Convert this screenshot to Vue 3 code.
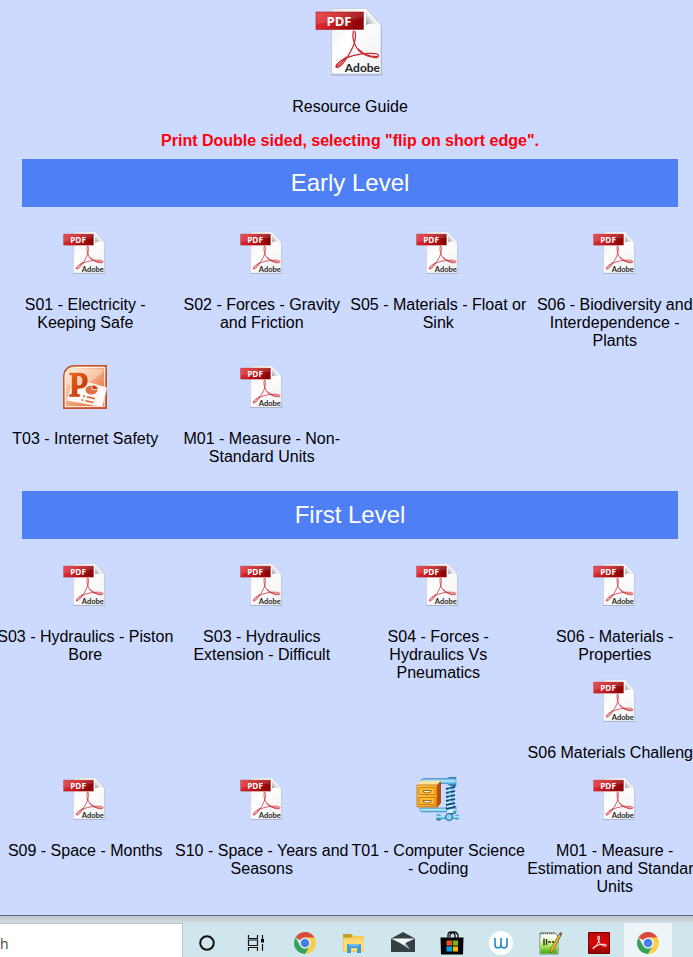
<script setup>
import { h } from 'vue'

const earlyLevel = [
  [{ icon: 'pdf', label: 'S01 - Electricity - Keeping Safe' }],
  [{ icon: 'pdf', label: 'S02 - Forces - Gravity and Friction' }],
  [{ icon: 'pdf', label: 'S05 - Materials - Float or Sink' }],
  [{ icon: 'pdf', label: 'S06 - Biodiversity and Interdependence - Plants' }],
  [{ icon: 'ppt', label: 'T03 - Internet Safety' }],
  [{ icon: 'pdf', label: 'M01 - Measure - Non-Standard Units' }],
]
const firstLevel = [
  [{ icon: 'pdf', label: 'S03 - Hydraulics - Piston Bore' }],
  [{ icon: 'pdf', label: 'S03 - Hydraulics Extension - Difficult' }],
  [{ icon: 'pdf', label: 'S04 - Forces - Hydraulics Vs Pneumatics' }],
  [
    { icon: 'pdf', label: 'S06 - Materials - Properties' },
    { icon: 'pdf', label: 'S06 Materials Challenge' },
  ],
  [{ icon: 'pdf', label: 'S09 - Space - Months' }],
  [{ icon: 'pdf', label: 'S10 - Space - Years and Seasons' }],
  [{ icon: 'zip', label: 'T01 - Computer Science - Coding' }],
  [{ icon: 'pdf', label: 'M01 - Measure - Estimation and Standard Units' }],
]
const sections = [
  { title: 'Early Level', cells: earlyLevel },
  { title: 'First Level', cells: firstLevel },
]
const apps = ['cortana', 'tasks', 'chrome', 'folder', 'mail', 'store', 'w', 'notepad', 'acrobat', 'chrome']

// The PDF badge carries two words of live text over its artwork.
const pdfWords = () => [
  h('text', { x: 11.5, y: 18.5, 'font-size': 13, 'font-weight': 700, 'font-family': 'Open Sans, sans-serif', fill: '#fff' }, 'PDF'),
  h('text', { x: 65, y: 65, 'text-anchor': 'end', 'font-size': 12, 'font-weight': 700, 'font-family': 'Lato, sans-serif', fill: '#262626' }, 'Adobe'),
]
const Icon = (props) => h('svg', { viewBox: props.box, 'aria-hidden': 'true' }, [
  h('use', { href: '#i-' + props.name }),
  ...(props.name === 'pdf' ? pdfWords() : []),
])
Icon.props = ['name', 'box']
</script>

<template>
  <svg class="defs" aria-hidden="true">
    <defs>
      <linearGradient id="g-red" x1="0" x2="1" y1="0" y2="0.3">
        <stop offset="0" stop-color="#e8383b" /><stop offset="0.5" stop-color="#c91c20" /><stop offset="1" stop-color="#8d0509" />
      </linearGradient>
      <linearGradient id="g-page" x1="0" x2="1" y1="0" y2="1">
        <stop offset="0" stop-color="#e9e9ea" /><stop offset="0.4" stop-color="#ffffff" /><stop offset="1" stop-color="#f1f1f1" />
      </linearGradient>
      <linearGradient id="g-fold" x1="0" x2="1" y1="1" y2="0">
        <stop offset="0" stop-color="#8f9499" /><stop offset="0.5" stop-color="#ffffff" /><stop offset="1" stop-color="#c8ccd0" />
      </linearGradient>
      <linearGradient id="g-ppt" x1="0" x2="1" y1="0" y2="1">
        <stop offset="0" stop-color="#fff0dc" /><stop offset="0.45" stop-color="#f6ae83" /><stop offset="1" stop-color="#dc5423" />
      </linearGradient>
      <linearGradient id="g-p" x1="0" x2="1" y1="0" y2="1">
        <stop offset="0" stop-color="#ec6a20" /><stop offset="1" stop-color="#b9290a" />
      </linearGradient>
      <linearGradient id="g-steel" x1="0" x2="0" y1="0" y2="1">
        <stop offset="0" stop-color="#1d699e" /><stop offset="0.4" stop-color="#b8efff" /><stop offset="0.7" stop-color="#3c9dd4" /><stop offset="1" stop-color="#124672" />
      </linearGradient>
      <linearGradient id="g-gold" x1="0" x2="1" y1="0" y2="1">
        <stop offset="0" stop-color="#ffd44e" /><stop offset="1" stop-color="#f49b12" />
      </linearGradient>
      <linearGradient id="g-green" x1="0" x2="0" y1="0" y2="1">
        <stop offset="0" stop-color="#f4ffe6" /><stop offset="0.45" stop-color="#baf06a" /><stop offset="1" stop-color="#3fa70c" />
      </linearGradient>
      <linearGradient id="g-acro" x1="0" x2="0" y1="0" y2="1">
        <stop offset="0" stop-color="#b90a0a" /><stop offset="0.5" stop-color="#d80808" /><stop offset="1" stop-color="#8f0202" />
      </linearGradient>
    </defs>

    <g id="i-pdf">
      <path d="M16 2h36l15 17v49.500H16z" fill="#8e98b4" opacity=".6" />
      <path d="M16.500 1.500H51L66 18.500V67H16.500z" fill="url(#g-page)" stroke="#c3c8d2" stroke-width=".7" />
      <path d="M51 2 66 19c-5-3-10-3-15-1z" fill="url(#g-fold)" />
      <g fill="none" stroke="#cc2630" stroke-width="1.200" stroke-linecap="round">
        <path d="M38.500 24c-1.500 5 .5 12 3 16.500C45 46 51 49.500 59 50.500c3 .4 5-.8 4.500-2-1-2.500-11-2.500-18-1.300-8 1.300-16.500 4.300-20.500 7.300-4.500 3.500-5 6.500-2.500 6 5-1.500 12.500-13.500 16-22 2-5 2.500-11.500 1.500-14" />
        <path d="M21.500 59.500c3-1 6-5 9.500-9.500M43 42c5 4.500 12 8 19 7.500" />
      </g>
      <path d="M1 5h47.500v17.500H1z" fill="url(#g-red)" stroke="#a71a20" stroke-width=".6" />
      <path d="M1.500 5.500H48v5L1.500 17z" fill="#fff" opacity=".12" />
    </g>

    <g id="i-ppt">
      <path d="M12 .7h31.300v42.600H.7V12Q1 1 12 .7z" fill="url(#g-ppt)" stroke="#c5532b" stroke-width="1.400" />
      <path d="M12 2.500h29.500v39h-39V12Q3 3 12 2.500z" fill="none" stroke="#fff" stroke-opacity=".8" />
      <path d="M4 19Q20 26 40 7V4H14Q4 4 4 14z" fill="#fff" opacity=".35" />
      <path d="M8 22 23 16.500 44 22.500 39.500 42 3.500 35.500z" fill="#fffaf6" stroke="#edc4ae" stroke-width=".5" />
      <ellipse cx="28.500" cy="25" rx="6" ry="4.500" fill="#e06f46" /><path d="M29 24.500V20q6 0 6 4.500z" fill="#c94117" stroke="#fff" stroke-width=".7" />
      <path d="m20 31 2 .4m2 .5 8 1.800M18.500 34.800l2 .4m2 .5 8 1.800" stroke="#dc6338" stroke-width="1.600" />
      <path d="M6 7.500h10.500q8.500 0 8.500 8T16 24h-1.500v5h2.500v3H6v-3h2.500V10.500H6zm8.500 4v8.500H16q3 0 3-4.300t-3-4.200z" fill="url(#g-p)" fill-rule="evenodd" stroke="#fff2e6" stroke-width=".5" />
    </g>

    <g id="i-zip">
      <path d="M5 5Q4 1.500 9 1.500h22l3-1.500h6v9l-4 1-5-3.500H8z" fill="url(#g-steel)" stroke="#2875a8" stroke-width=".5" />
      <path d="M4 31h25l3-2h8v7l-5 2-5-3H7q-4 0-3-4z" fill="url(#g-steel)" stroke="#2875a8" stroke-width=".5" />
      <path d="M31 9h6v27h-6z" fill="#d9f1f8" />
      <path d="m30 12 9-2m-9 6 9-2m-9 6 9-2m-9 6 9-2m-9 6 9-2m-9 6 9-2" stroke="#164b83" stroke-width="1.800" />
      <path d="m31 10 7 3.500M31 14l7 3.500M31 18l7 3.500M31 22l7 3.500" stroke="#55b1d8" stroke-width=".8" />
      <path d="M20 38q4-2 6 1h12q3-3 6 0-1 5-5 3H26q-4 3-6 0z" fill="url(#g-steel)" /><circle cx="33" cy="40" r="3.500" fill="#8ed5ef" stroke="#165788" />
      <path d="m1 8 4-4h19l-3 4z" fill="#ffe59a" /><path d="m21 8 4-4v22l-4 5z" fill="#b54c12" />
      <path d="M1 8h20v22H1z" fill="url(#g-gold)" stroke="#bf680e" stroke-width=".8" />
      <path d="M3 10.500h16v7H3zM3 20.500h16v7H3z" fill="#ffbd2f" stroke="#c46f18" stroke-width=".8" />
      <path d="M7 13.500h8v1.500q-4 2-8 0zM7 23.500h8V25q-4 2-8 0z" fill="#fff4c5" stroke="#70420e" stroke-width=".7" />
    </g>

    <g id="i-cortana"><circle cx="12" cy="12" r="6.800" fill="none" stroke="#0b1013" stroke-width="2" /></g>
    <g id="i-tasks">
      <path d="M4.500 4v3.500h9V4M4.500 20v-3.500h9V20M4.500 9h9v5.500h-9zM18.500 4v4M18.500 13v7" fill="none" stroke="#111" stroke-width="1.200" /><path d="M17 8h3v3.500h-3z" fill="#111" />
    </g>
    <g id="i-chrome">
      <path d="M12 12 2.500 6.500A11 11 0 0 1 21.500 6.500z" fill="#d84a3d" />
      <path d="M12 6.500h9.500q1.500 2.500 1.500 5.500a11 11 0 0 1-11 11l5-8z" fill="#fbd047" />
      <path d="M2.500 6.500 7 14.500l5 3 4.500-2L12 23A11 11 0 0 1 2.500 6.500z" fill="#36a159" />
      <circle cx="12" cy="12" r="5.600" fill="#f5f8f7" /><circle cx="12" cy="12" r="4.300" fill="#467fe5" />
    </g>
    <g id="i-folder">
      <path d="M1 3h8l2 2h11v16H1z" fill="#f5cb55" /><path d="M1 3h8l2 2-2 1.500H1z" fill="#c79b22" /><path d="M2 8h20v12H2z" fill="#ffda70" />
      <path d="M5 14q0-1 1-1h12q1 0 1 1v8h-4v-5H9v5H5z" fill="#3e9cda" /><path d="M7 13h10v2H7z" fill="#71bdec" />
    </g>
    <g id="i-mail">
      <path d="M0 7.500 12 1l12 6.500V21H0z" fill="#354044" /><path d="M0 7.500h24L14.500 12l4 6L9 12z" fill="#edf6f8" /><path d="m14 12 4.500 6-5-3z" fill="#9eb0b6" />
    </g>
    <g id="i-store">
      <path d="M8 7V4q0-3 3-3t4 3v3M10 6V4q1-3 4-3t4 3v3" fill="none" stroke="#111" stroke-width="1.300" />
      <path d="M.5 6.500h23l-.5 17H1z" fill="#050505" />
      <path d="M6.500 9.500H12V14.500H6.500z" fill="#f05024" /><path d="M12.800 9.500h5.200v5h-5.200z" fill="#7db900" /><path d="M6.500 15.500H12v5H6.500z" fill="#00a3ec" /><path d="M12.800 15.500h5.200v5h-5.200z" fill="#ffb900" />
    </g>
    <g id="i-w">
      <circle cx="12" cy="12" r="12" fill="#fff" /><path d="M6 7v6.500q0 3.500 3 3.500t3-3.500V7m0 6.500q0 3.500 3 3.500t3-3.500V7" fill="none" stroke="#2d8fc4" stroke-width="1.700" />
    </g>
    <g id="i-notepad">
      <path d="M2 2h15l3 3v18H2z" fill="#f8fcf3" stroke="#708066" /><path d="M2.500 7h17v15.500h-17z" fill="url(#g-green)" />
      <path d="M3 2.500h13" stroke="#555" stroke-width="1.500" stroke-dasharray="1 1" /><path d="M6 7.500v7M8.500 8v6M10 11h3M14 11h2" stroke="#27331e" stroke-width="1.400" />
      <path d="m22 2 1.500 1.500L15 20l-3 2 .5-4z" fill="#e8b43e" stroke="#6b521d" stroke-width=".7" /><path d="m21 3 2-2 1 1-1 3z" fill="#6f5547" />
    </g>
    <g id="i-acrobat">
      <path d="M1.500 1.500h21v21h-21z" fill="url(#g-acro)" stroke="#700" />
      <path d="M11.500 5c-1.500 0-.5 5 1.500 7.500 2 2.300 6 3.500 6.500 2s-4-1.500-8-.5-6 2.500-5.500 3.500 3.500-2 5-5.500 2-7 .5-7z" fill="none" stroke="#fff" stroke-width="1" />
    </g>
  </svg>

  <main class="page">
    <header class="intro">
      <a class="guide" href="#guide"><Icon class="guide-icon" name="pdf" box="0 0 70 70" /><span>Resource Guide</span></a>
      <p class="notice">Print Double sided, selecting "flip on short edge".</p>
    </header>
    <section v-for="section in sections" :key="section.title" class="level">
      <h2>{{ section.title }}</h2>
      <div class="grid">
        <div v-for="cell in section.cells" :key="cell[0].label" class="cell">
          <a v-for="item in cell" :key="item.label" class="item" href="#resource">
            <Icon class="file-icon" :name="item.icon" :box="item.icon === 'pdf' ? '0 0 70 70' : '0 0 44 44'" />
            <span>{{ item.label }}</span>
          </a>
        </div>
      </div>
    </section>
  </main>

  <footer class="taskbar">
    <input class="search" type="text" value="h" aria-label="Search" />
    <nav class="apps">
      <button v-for="(app, i) in apps" :key="i" type="button" class="app" :class="{ active: i === 9 }" :aria-label="app">
        <Icon class="app-icon" :name="app" box="0 0 24 24" />
      </button>
    </nav>
  </footer>
</template>

<style>
body { margin: 0; background: #cddaff; overflow-x: hidden; }
</style>

<style scoped>
.defs { position: absolute; width: 0; height: 0; }
.page {
  margin-right: -7px;
  padding: 7px 0 2px;
  color: #000;
  background: #cddaff;
  font: 16px/18px "Liberation Sans", Arial, sans-serif;
  text-align: center;
}
a { color: inherit; text-decoration: none; }
.intro { display: flex; flex-direction: column; align-items: center; gap: 16px; padding-bottom: 9px; }
.guide { display: flex; flex-direction: column; align-items: center; gap: 21px; }
.guide-icon { width: 70px; height: 70px; }
.notice { margin: 0; color: #ff0008; font-weight: 700; }
h2 { margin: 0 22px; color: #fff; background: #4f7ff5; font-size: 24px; line-height: 48px; font-weight: 400; }
.grid { display: grid; grid-template-columns: repeat(4, minmax(0, 1fr)); row-gap: 15px; margin: 0 -3px; padding: 24px 0 25px; }
.level:last-child .grid { padding-bottom: 17px; }
.cell { display: flex; flex-direction: column; gap: 15px; }
.item { display: flex; flex-direction: column; align-items: center; gap: 21px; }
.file-icon { width: 44px; height: 44px; }
.taskbar {
  display: flex;
  box-sizing: border-box;
  height: 42px;
  padding-top: 7px;
  border-top: 1px solid #62687a;
  background: linear-gradient(#bfc3c6, #d3e3e9 8px, #d0e6ed 12px);
  overflow: hidden;
}
.search {
  flex: 0 0 183px;
  box-sizing: border-box;
  min-width: 0;
  padding: 6px 0 0;
  border: solid #b9bfc2;
  border-width: 1px 1px 0 0;
  border-radius: 0;
  background: #fff;
  color: #444;
  font: 14px/20px "Open Sans", sans-serif;
}
.apps { display: flex; gap: 1px; }
.app { display: grid; place-items: center; width: 48px; padding: 5px 0 0; border: 0; background: none; }
.app.active { background: #edf5f8; }
.app-icon { width: 24px; height: 24px; }
</style>
